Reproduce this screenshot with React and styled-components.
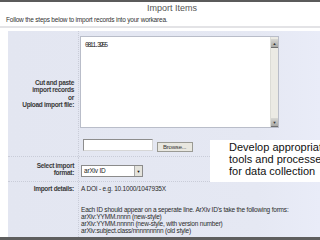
import React from 'react';
import styled, { createGlobalStyle } from 'styled-components';

const GlobalStyle = createGlobalStyle`
  html, body {
    margin: 0;
    padding: 0;
    background: #fff;
  }
`;

const Page = styled.div`
  position: relative;
  width: 320px;
  height: 240px;
  overflow: hidden;
  background: #fff;
  display: flex;
  flex-direction: column;
  font-family: "Liberation Sans", Arial, sans-serif;
  letter-spacing: -0.2px;
  color: #2a2a2a;
`;

const Rule = styled.div`
  flex: none;
  height: ${props => props.size}px;
  background: ${props => props.color};
`;

const Title = styled.div`
  flex: none;
  height: 13px;
  padding-left: 24px;
  text-align: center;
  font-size: 9px;
  line-height: 12px;
  letter-spacing: 0;
  color: #555;
`;

const Intro = styled.div`
  flex: none;
  height: 9px;
  padding: 1px 0 0 6px;
  font-size: 6.5px;
  line-height: 8px;
  color: #333;
`;

const Divider = styled.div`
  flex: none;
  height: 2px;
  margin-top: 1px;
  background: #e3e3e6;
`;

const Panel = styled.div`
  flex: 1;
  margin: 3px 0 0 8px;
  background: linear-gradient(to right, #e3e6f1 0%, #e5e8f3 80%, #e9ecf8 100%);
  display: flex;
  flex-direction: column;
`;

const FormRow = styled.div`
  display: grid;
  grid-template-columns: 71px 1fr;
  border-bottom: ${props => (props.last ? 'none' : '1px dotted #c9ccd8')};
  flex: ${props => (props.last ? 1 : 'none')};
`;

const Label = styled.div`
  display: flex;
  flex-direction: column;
  justify-content: ${props => (props.top ? 'flex-start' : 'center')};
  align-items: flex-end;
  padding: ${props => (props.top ? '3px' : '0')} 4px 0 0;
  border-right: 1px dotted #c9ccd8;
  font-size: 6.5px;
  line-height: 7.5px;
  letter-spacing: -0.3px;
  font-weight: bold;
  color: #3a3a3a;
  text-align: right;
`;

const Cell = styled.div`
  display: flex;
  flex-direction: column;
  align-items: flex-start;
  padding: ${props => props.pad};
`;

const TextBox = styled.div`
  display: flex;
  width: 199px;
  height: 92px;
  box-sizing: border-box;
  border: 1px solid #b9bdc9;
  background: #fff;
`;

const TextValue = styled.div`
  flex: 1;
  padding: 5px 0 0 4px;
  font-family: "Liberation Mono", "Courier New", monospace;
  font-size: 6.5px;
  letter-spacing: -1.5px;
  line-height: 7px;
  color: #222;
`;

const Scrollbar = styled.div`
  width: 7px;
  display: flex;
  flex-direction: column;
  justify-content: space-between;
  background: #ebeae4;
  border-left: 1px solid #dcdcd6;
`;

const ScrollButton = styled.div`
  height: 8px;
  margin-top: ${props => (props.down ? 0 : 2)}px;
  background: linear-gradient(to bottom, #d8d8d4, #a9a9a6);
  border-bottom: 1px solid #6f6f6f;
  display: flex;
  align-items: center;
  justify-content: center;
  font-size: 4px;
  color: #333;
`;

const FileRow = styled.div`
  display: flex;
  align-items: flex-start;
  gap: 4px;
  margin: 11px 0 0 3px;
`;

const FileField = styled.div`
  width: 70px;
  height: 12px;
  box-sizing: border-box;
  border: 1px solid #8d8d8d;
  border-right-color: #d6d6d6;
  border-bottom-color: #d6d6d6;
  background: #fff;
`;

const BrowseButton = styled.div`
  margin-top: 3px;
  width: 36px;
  height: 10px;
  box-sizing: border-box;
  border: 1px solid #9a9a94;
  background: #e8e7e0;
  font-size: 6px;
  line-height: 8px;
  padding-left: 5px;
  color: #333;
`;

const Select = styled.div`
  display: flex;
  width: 62px;
  height: 12px;
  box-sizing: border-box;
  margin: 8px 0 0 2px;
  border: 1px solid #8b8b8b;
  background: #fff;
`;

const SelectValue = styled.div`
  flex: 1;
  font-size: 6.5px;
  line-height: 10px;
  padding-left: 2px;
  color: #222;
`;

const SelectArrow = styled.div`
  width: 7px;
  background: #e4e3dc;
  border-left: 1px solid #a8a8a8;
  display: flex;
  align-items: center;
  justify-content: center;
  font-size: 4px;
  color: #111;
`;

const Details = styled.div`
  padding: 3px 0 0 2px;
  font-size: 6.5px;
  line-height: 7px;
  color: #2a2a2a;
  white-space: nowrap;
`;

const Para = styled.div`
  margin-top: ${props => props.gap || 0}px;
`;

const Callout = styled.div`
  position: absolute;
  left: 210px;
  top: 140px;
  width: 120px;
  height: 42px;
  box-sizing: border-box;
  padding: 1px 0 0 19px;
  background: #fff;
  font-size: 11px;
  line-height: 12px;
  letter-spacing: 0;
  color: #111;
  white-space: nowrap;
`;

export default function App() {
  return (
    <Page>
      <GlobalStyle />
      <Rule size={2} color="#5b5b5b" />
      <Title>Import Items</Title>
      <Intro>Follow the steps below to import records into your workarea.</Intro>
      <Divider />
      <Panel>
        <FormRow>
          <Label>
            <span>Cut and paste</span>
            <span>import records</span>
            <span>or</span>
            <span>Upload import file:</span>
          </Label>
          <Cell pad="5px 0 4px 1px">
            <TextBox>
              <TextValue>0811.3955</TextValue>
              <Scrollbar>
                <ScrollButton>▲</ScrollButton>
                <ScrollButton down>▼</ScrollButton>
              </Scrollbar>
            </TextBox>
            <FileRow>
              <FileField />
              <BrowseButton>Browse...</BrowseButton>
            </FileRow>
          </Cell>
        </FormRow>
        <FormRow>
          <Label>
            <span>Select import</span>
            <span>format:</span>
          </Label>
          <Cell pad="0 0 4px 0">
            <Select>
              <SelectValue>arXiv ID</SelectValue>
              <SelectArrow>▼</SelectArrow>
            </Select>
          </Cell>
        </FormRow>
        <FormRow last>
          <Label top>
            <span>Import details:</span>
          </Label>
          <Details>
            <Para>A DOI - e.g. 10.1000/1047935X</Para>
            <Para gap={14}>
              Each ID should appear on a seperate line. ArXiv ID's take the following forms:
            </Para>
            <Para>arXiv:YYMM.nnnn (new-style)</Para>
            <Para>arXiv:YYMM.nnnnn (new-style, with version number)</Para>
            <Para>arXiv:subject.class/nnnnnnnnn (old style)</Para>
          </Details>
        </FormRow>
      </Panel>
      <Rule size={3} color="#5e5e5e" />
      <Callout>
        Develop appropriate
        <br />
        tools and processes
        <br />
        for data collection
      </Callout>
    </Page>
  );
}
